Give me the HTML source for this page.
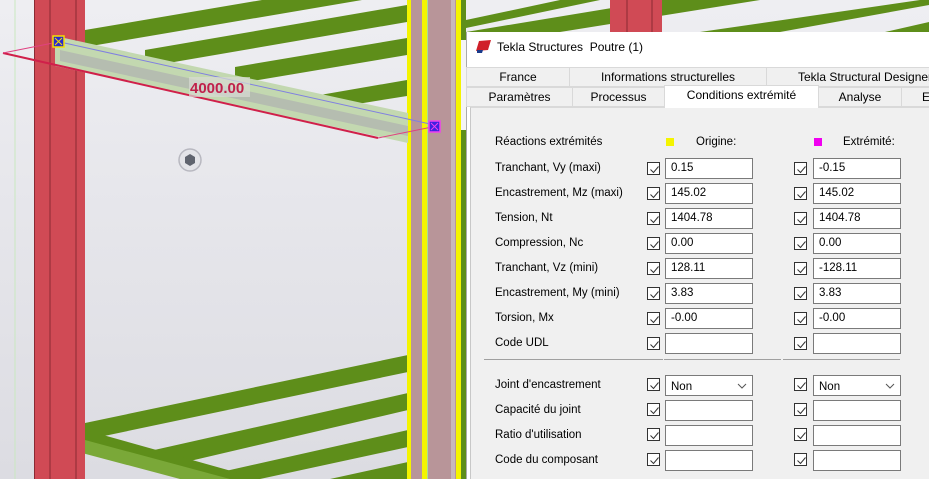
<!DOCTYPE html>
<html><head><meta charset="utf-8"><style>
*{margin:0;padding:0;box-sizing:border-box}
body{width:929px;height:479px;overflow:hidden;position:relative;font-family:"Liberation Sans",Arial,sans-serif;font-size:12px;color:#000;background:#e6e6ea}
.a{position:absolute}
.tab{position:absolute;height:20px;background:#f0f0f0;border:1px solid #d9d9d9;text-align:center;line-height:18px;font-size:12px;white-space:nowrap;overflow:hidden}
.lbl{position:absolute;left:495px;font-size:11.5px}
.cb{position:absolute;width:13px;height:13px;border:1px solid #333;background:#fff}
.cb svg{position:absolute;left:1px;top:1px}
.in{position:absolute;width:88px;height:21px;border:1px solid #7a7a7a;background:#fff;padding-left:5px;line-height:19px;font-size:11.5px}
</style></head><body>
<svg class="a" style="left:0;top:0" width="929" height="479">
<defs><linearGradient id="bg" x1="0" y1="0" x2="0" y2="1"><stop offset="0" stop-color="#eeeef2"/><stop offset="1" stop-color="#dcdce2"/></linearGradient></defs>
<rect width="929" height="479" fill="url(#bg)"/>
<line x1="15" y1="0" x2="15" y2="479" stroke="#c9e8c0"/>
<g fill="#5e8e1a">
<polygon points="85,30 262,0 362,0 85,47"/>
<polygon points="145,50 407,5 407,22 145,67"/>
<polygon points="235,67 407,38 407,55 235,84"/>
<polygon points="320,95 407,80 407,96 320,110"/>
<polygon points="466,20 560,0 600,0 466,28"/>
<polygon points="466,32 660,0 760,0 560,32"/>
<polygon points="700,32 920,0 929,0 929,5 780,32"/>
<polygon points="885,32 929,22 929,32"/>
<polygon points="85,423 408,355 408,372 85,440"/>
<polygon points="110,460 408,393 408,410 160,468"/>
<polygon points="190,479 408,430 408,447 260,479"/>
<polygon points="330,479 408,462 408,479"/>
<polygon points="55,435 85,430 260,479 200,479"/>
</g>
<polygon points="52,445 85,440 230,479 180,479" fill="#7aa838"/>
<rect x="34" y="0" width="51" height="479" fill="#d04a55"/>
<line x1="50" y1="0" x2="50" y2="479" stroke="#8a2a33"/>
<line x1="76" y1="0" x2="76" y2="479" stroke="#8a2a33"/>
<line x1="34.5" y1="0" x2="34.5" y2="479" stroke="#8a2a33"/>
<rect x="610" y="0" width="52" height="33" fill="#d04a55"/>
<line x1="627" y1="0" x2="627" y2="33" stroke="#8a2a33"/>
<line x1="652" y1="0" x2="652" y2="33" stroke="#8a2a33"/>
<rect x="407" y="0" width="59" height="479" fill="#b89599"/>
<rect x="407" y="0" width="4" height="479" fill="#f4f400"/>
<rect x="422" y="0" width="5" height="479" fill="#f4f400"/>
<rect x="427" y="0" width="1" height="479" fill="#a8e090"/>
<rect x="451" y="0" width="4" height="479" fill="#c8b8bb"/>
<rect x="456" y="0" width="5" height="479" fill="#f4f400"/>
<rect x="461" y="0" width="5" height="479" fill="#5e8e1a"/>
<rect x="461" y="40" width="5" height="90" fill="#f4f4f4"/>
<polygon points="55,36 408,113 408,143 55,66" fill="#c3d8b0"/>
<polygon points="60,50 408,126 408,136 60,61" fill="#b5bdb0"/>
<line x1="60" y1="42" x2="430" y2="124" stroke="#8080e0"/>
<line x1="3" y1="53" x2="378" y2="138" stroke="#d0204a" stroke-width="2"/>
<line x1="3" y1="53" x2="58" y2="42" stroke="#e04080"/>
<line x1="378" y1="138" x2="432" y2="127" stroke="#e04080"/>
<rect x="189" y="77" width="61" height="20" fill="#d8dcd4" opacity=".7"/>
<text x="190" y="93" font-family="Liberation Sans" font-weight="bold" font-size="15" fill="#c0204a">4000.00</text>
<rect x="53" y="36" width="11" height="11" fill="#2a2ad0" stroke="#f4e000" stroke-width="1.5"/>
<path d="M55 38l7 7M62 38l-7 7" stroke="#f4e000"/>
<rect x="429" y="121" width="11" height="11" fill="#4020e0" stroke="#f040f0" stroke-width="1.5"/>
<path d="M431 123l7 7M438 123l-7 7" stroke="#f040f0"/>
<circle cx="190" cy="160" r="11" fill="#e4e4e8" stroke="#b8b8c0" stroke-width="1.5"/>
<path d="M185 157l5-3 5 3v6l-5 3-5-3z" fill="#60646e"/>
</svg>

<div class="a" style="left:466px;top:32px;width:463px;height:447px;background:#fff;border-left:1px solid #aaa"></div>
<svg class="a" style="left:476px;top:40px" width="16" height="14"><polygon points="3,1 15,0 12,10 0,11" fill="#d0202a"/><polygon points="1,10 7,10 6,13 1,13" fill="#1a3a8a"/></svg>
<div class="a" style="left:497px;top:40px;font-size:12px">Tekla Structures&nbsp; Poutre (1)</div>
<div class="a" style="left:470px;top:107px;width:459px;height:372px;background:#f0f0f0;border-left:1px solid #c8c8c8;border-top:1px solid #d9d9d9"></div>
<div class="tab" style="left:466px;top:67px;width:104px">France</div>
<div class="tab" style="left:569px;top:67px;width:198px">Informations structurelles</div>
<div class="tab" style="left:766px;top:67px;width:170px;text-align:left;padding-left:31px">Tekla Structural Designer</div>
<div class="tab" style="left:466px;top:87px;width:107px">Paramètres</div>
<div class="tab" style="left:572px;top:87px;width:93px">Processus</div>
<div class="tab" style="left:664px;top:85px;width:155px;height:23px;background:#fff;border-bottom:none">Conditions extrémité</div>
<div class="tab" style="left:818px;top:87px;width:84px">Analyse</div>
<div class="tab" style="left:901px;top:87px;width:40px;text-align:left;padding-left:20px">E</div>

<div class="lbl" style="top:136px">Réactions extrémités</div>
<div class="a" style="left:666px;top:138px;width:8px;height:8px;background:#f4f400"></div>
<div class="a" style="left:696px;top:136px;font-size:11.5px">Origine:</div>
<div class="a" style="left:814px;top:138px;width:8px;height:8px;background:#f000f0"></div>
<div class="a" style="left:843px;top:136px;font-size:11.5px">Extrémité:</div>

<div class="a" style="left:484px;top:359px;width:179px;height:1px;background:#a0a0a0"></div>
<div class="a" style="left:664px;top:359px;width:117px;height:1px;background:#a0a0a0"></div>
<div class="a" style="left:783px;top:359px;width:117px;height:1px;background:#a0a0a0"></div>

<div class="lbl" style="top:162px">Tranchant, Vy (maxi)</div>
<div class="lbl" style="top:187px">Encastrement, Mz (maxi)</div>
<div class="lbl" style="top:212px">Tension, Nt</div>
<div class="lbl" style="top:237px">Compression, Nc</div>
<div class="lbl" style="top:262px">Tranchant, Vz (mini)</div>
<div class="lbl" style="top:287px">Encastrement, My (mini)</div>
<div class="lbl" style="top:312px">Torsion, Mx</div>
<div class="lbl" style="top:337px">Code UDL</div>
<div class="lbl" style="top:379px">Joint d'encastrement</div>
<div class="lbl" style="top:404px">Capacité du joint</div>
<div class="lbl" style="top:429px">Ratio d'utilisation</div>
<div class="lbl" style="top:454px">Code du composant</div>

<div>
<div class="cb" style="left:647px;top:162px"><svg width="11" height="11"><path d="M1.5 5.5l3 3 5-6" stroke="#333" fill="none"/></svg></div><div class="in" style="left:665px;top:158px">0.15</div>
<div class="cb" style="left:794px;top:162px"><svg width="11" height="11"><path d="M1.5 5.5l3 3 5-6" stroke="#333" fill="none"/></svg></div><div class="in" style="left:813px;top:158px">-0.15</div>
<div class="cb" style="left:647px;top:187px"><svg width="11" height="11"><path d="M1.5 5.5l3 3 5-6" stroke="#333" fill="none"/></svg></div><div class="in" style="left:665px;top:183px">145.02</div>
<div class="cb" style="left:794px;top:187px"><svg width="11" height="11"><path d="M1.5 5.5l3 3 5-6" stroke="#333" fill="none"/></svg></div><div class="in" style="left:813px;top:183px">145.02</div>
<div class="cb" style="left:647px;top:212px"><svg width="11" height="11"><path d="M1.5 5.5l3 3 5-6" stroke="#333" fill="none"/></svg></div><div class="in" style="left:665px;top:208px">1404.78</div>
<div class="cb" style="left:794px;top:212px"><svg width="11" height="11"><path d="M1.5 5.5l3 3 5-6" stroke="#333" fill="none"/></svg></div><div class="in" style="left:813px;top:208px">1404.78</div>
<div class="cb" style="left:647px;top:237px"><svg width="11" height="11"><path d="M1.5 5.5l3 3 5-6" stroke="#333" fill="none"/></svg></div><div class="in" style="left:665px;top:233px">0.00</div>
<div class="cb" style="left:794px;top:237px"><svg width="11" height="11"><path d="M1.5 5.5l3 3 5-6" stroke="#333" fill="none"/></svg></div><div class="in" style="left:813px;top:233px">0.00</div>
<div class="cb" style="left:647px;top:262px"><svg width="11" height="11"><path d="M1.5 5.5l3 3 5-6" stroke="#333" fill="none"/></svg></div><div class="in" style="left:665px;top:258px">128.11</div>
<div class="cb" style="left:794px;top:262px"><svg width="11" height="11"><path d="M1.5 5.5l3 3 5-6" stroke="#333" fill="none"/></svg></div><div class="in" style="left:813px;top:258px">-128.11</div>
<div class="cb" style="left:647px;top:287px"><svg width="11" height="11"><path d="M1.5 5.5l3 3 5-6" stroke="#333" fill="none"/></svg></div><div class="in" style="left:665px;top:283px">3.83</div>
<div class="cb" style="left:794px;top:287px"><svg width="11" height="11"><path d="M1.5 5.5l3 3 5-6" stroke="#333" fill="none"/></svg></div><div class="in" style="left:813px;top:283px">3.83</div>
<div class="cb" style="left:647px;top:312px"><svg width="11" height="11"><path d="M1.5 5.5l3 3 5-6" stroke="#333" fill="none"/></svg></div><div class="in" style="left:665px;top:308px">-0.00</div>
<div class="cb" style="left:794px;top:312px"><svg width="11" height="11"><path d="M1.5 5.5l3 3 5-6" stroke="#333" fill="none"/></svg></div><div class="in" style="left:813px;top:308px">-0.00</div>
<div class="cb" style="left:647px;top:337px"><svg width="11" height="11"><path d="M1.5 5.5l3 3 5-6" stroke="#333" fill="none"/></svg></div><div class="in" style="left:665px;top:333px"></div>
<div class="cb" style="left:794px;top:337px"><svg width="11" height="11"><path d="M1.5 5.5l3 3 5-6" stroke="#333" fill="none"/></svg></div><div class="in" style="left:813px;top:333px"></div>
<div class="cb" style="left:647px;top:378px"><svg width="11" height="11"><path d="M1.5 5.5l3 3 5-6" stroke="#333" fill="none"/></svg></div><div class="in" style="left:665px;top:375px;padding-top:2px">Non<svg style="position:absolute;right:5px;top:7px" width="10" height="6"><path d="M1 1l4 4 4-4" stroke="#555" fill="none"/></svg></div>
<div class="cb" style="left:794px;top:378px"><svg width="11" height="11"><path d="M1.5 5.5l3 3 5-6" stroke="#333" fill="none"/></svg></div><div class="in" style="left:813px;top:375px;padding-top:2px">Non<svg style="position:absolute;right:5px;top:7px" width="10" height="6"><path d="M1 1l4 4 4-4" stroke="#555" fill="none"/></svg></div>
<div class="cb" style="left:647px;top:403px"><svg width="11" height="11"><path d="M1.5 5.5l3 3 5-6" stroke="#333" fill="none"/></svg></div><div class="in" style="left:665px;top:400px"></div>
<div class="cb" style="left:794px;top:403px"><svg width="11" height="11"><path d="M1.5 5.5l3 3 5-6" stroke="#333" fill="none"/></svg></div><div class="in" style="left:813px;top:400px"></div>
<div class="cb" style="left:647px;top:428px"><svg width="11" height="11"><path d="M1.5 5.5l3 3 5-6" stroke="#333" fill="none"/></svg></div><div class="in" style="left:665px;top:425px"></div>
<div class="cb" style="left:794px;top:428px"><svg width="11" height="11"><path d="M1.5 5.5l3 3 5-6" stroke="#333" fill="none"/></svg></div><div class="in" style="left:813px;top:425px"></div>
<div class="cb" style="left:647px;top:453px"><svg width="11" height="11"><path d="M1.5 5.5l3 3 5-6" stroke="#333" fill="none"/></svg></div><div class="in" style="left:665px;top:450px"></div>
<div class="cb" style="left:794px;top:453px"><svg width="11" height="11"><path d="M1.5 5.5l3 3 5-6" stroke="#333" fill="none"/></svg></div><div class="in" style="left:813px;top:450px"></div>
</div>
</body></html>
